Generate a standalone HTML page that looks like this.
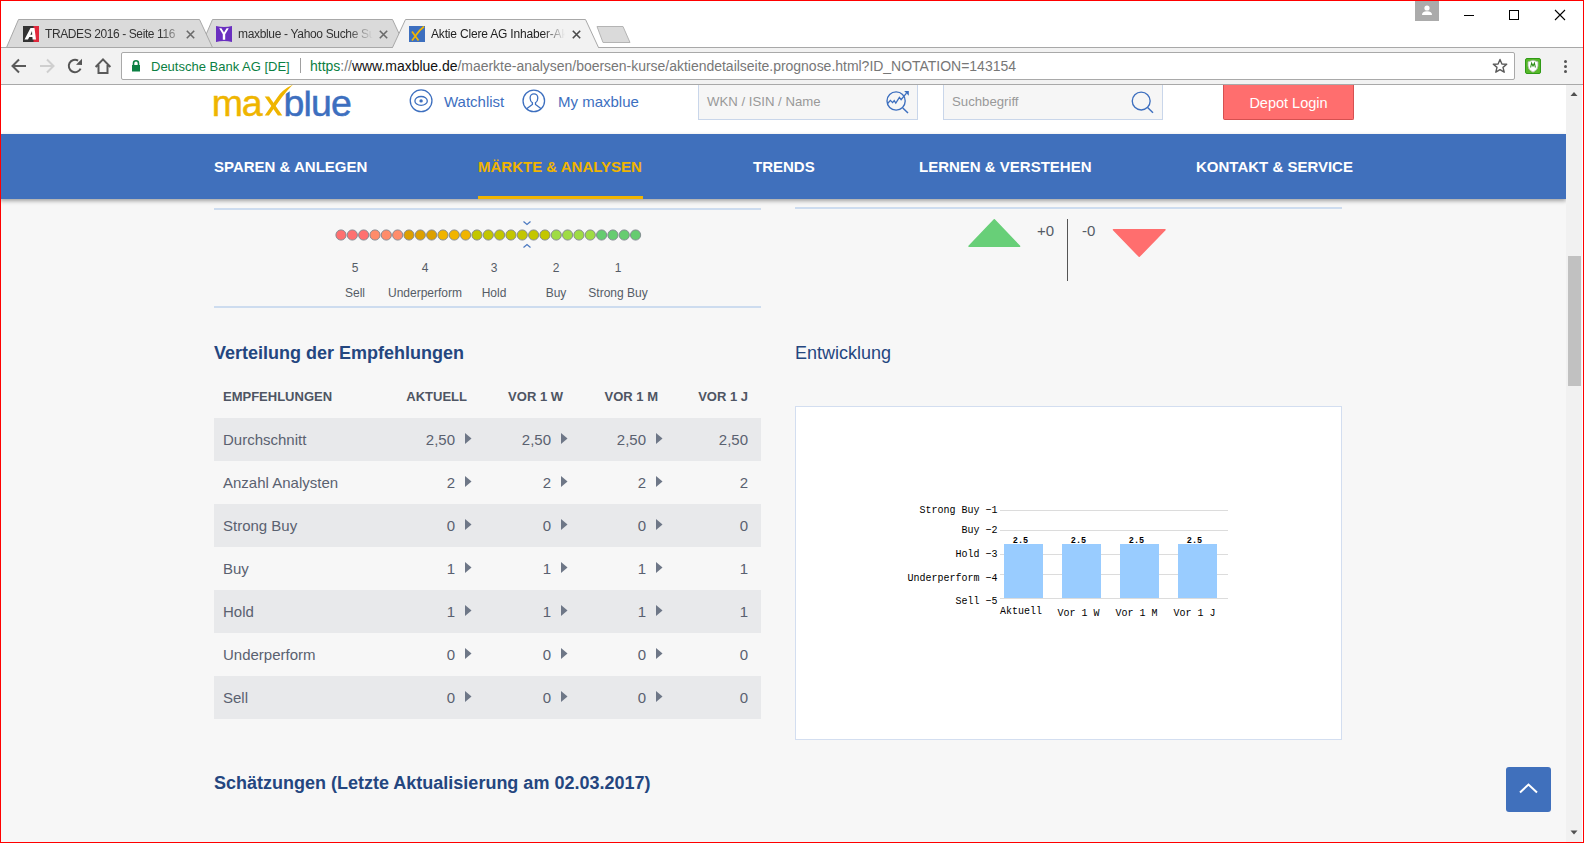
<!DOCTYPE html>
<html><head><meta charset="utf-8">
<style>
*{box-sizing:border-box;margin:0;padding:0}
html,body{width:1584px;height:843px;overflow:hidden;background:#fff;font-family:"Liberation Sans",sans-serif}
.a{position:absolute}
#win{position:absolute;left:0;top:0;width:1584px;height:843px;border:1px solid #ff0000;overflow:hidden}
/* chrome */
#tabstrip{position:absolute;left:0;top:0;width:1584px;height:47px;background:#fff}
.tab{position:absolute;top:19px;height:29px}
.tab svg{position:absolute;left:0;top:0}
.tabtxt{position:absolute;font-size:12px;letter-spacing:-0.4px;color:#333;white-space:nowrap;overflow:hidden}
.tabx{position:absolute;top:6px;width:12px;height:12px}
#toolbar{position:absolute;left:0;top:47px;width:1584px;height:38px;background:#f2f2f2;border-top:1px solid #a9a9a9;border-bottom:1px solid #a9a9a9}
#omni{position:absolute;left:121px;top:52px;width:1394px;height:28px;background:#fff;border:1px solid #a9a9a9;border-radius:2px}
/* page */
#page{position:absolute;left:0;top:85px;width:1566px;height:757px;background:#f7f7f7;overflow:hidden}
#hdr{position:absolute;left:0;top:0;width:1566px;height:49px;background:#fff}
#nav{position:absolute;left:0;top:49px;width:1566px;height:65px;background:#4070bc;box-shadow:0 2px 4px rgba(0,0,0,.35)}
.navi{position:absolute;top:24px;font-size:15px;font-weight:bold;color:#fff;white-space:nowrap}
#sb{position:absolute;left:1566px;top:85px;width:16px;height:757px;background:#f1f1f1}
.lbl{position:absolute;font-size:12px;line-height:14px;color:#555c66;white-space:nowrap;transform:translateX(-50%)}
.h2{position:absolute;font-size:18px;font-weight:bold;line-height:21px;color:#24467f;white-space:nowrap}
.th{position:absolute;top:389px;font-size:13px;font-weight:bold;line-height:15px;color:#4e5563;white-space:nowrap}
.td{position:absolute;font-size:15px;line-height:17px;color:#5a6170;white-space:nowrap}
</style></head><body>
<div id="win">
</div>
<div id="tabstrip"></div>
<div id="toolbar"></div>
<svg class="a" style="left:0;top:0" width="1584" height="48">
  <!-- tab2 (behind) -->
  <path d="M200.5,47.5 L212.5,19.5 L392.5,19.5 L405.5,47.5 Z" fill="#dadada" stroke="#a8a8a8" stroke-width="1"/>
  <!-- tab1 -->
  <path d="M6.5,47.5 L18.5,19.5 L199.5,19.5 L212.5,47.5 Z" fill="#dadada" stroke="#a8a8a8" stroke-width="1"/>
  <!-- toolbar top line -->
  <line x1="0" y1="47.5" x2="1584" y2="47.5" stroke="#a8a8a8"/>
  <!-- active tab3 -->
  <path d="M392.5,47.5 L405.5,19.5 L585.5,19.5 L598.5,47.5" fill="#f2f2f2" stroke="#a8a8a8" stroke-width="1"/>
  <rect x="393" y="47" width="205" height="2" fill="#f2f2f2"/>
  <!-- new tab btn -->
  <path d="M597,26.5 L623,26.5 L630,42.5 L603,42.5 Z" fill="#dadada" stroke="#b4b4b4" stroke-width="1" stroke-linejoin="round"/>
</svg>

<div id="omni"></div>

<!-- tab contents -->
<svg class="a" style="left:23px;top:26px" width="16" height="16"><rect width="16" height="16" fill="#333"/><rect x="10.5" width="5.5" height="16" fill="#e0283c"/><path d="M1.5,13.5 L7.5,2 L11.5,2 L13,13.5 L9.6,13.5 L9.4,11 L6.3,11 L5,13.5 Z M7.4,8.7 L9.2,8.7 L9,5 Z" fill="#fff"/></svg>
<div class="a tabtxt" style="left:45px;top:27px;width:140px;line-height:15px;color:#333;-webkit-mask-image:linear-gradient(90deg,#000 115px,transparent 140px)">TRADES 2016 - Seite 116</div>
<svg class="a" style="left:186px;top:30px" width="9" height="9"><path d="M0.8,0.8 L8.2,8.2 M8.2,0.8 L0.8,8.2" stroke="#6a6a6a" stroke-width="1.6"/></svg>
<svg class="a" style="left:216px;top:26px" width="16" height="16"><path d="M0,0 Q8,2 16,0 L16,16 Q8,14 0,16 Z" fill="#6a2fc0"/><path d="M3.2,2.3 L6.8,8.2 L6.8,13.8 L9.2,13.8 L9.2,8.2 L12.8,2.3 L10.6,2.3 L8,6.6 L5.4,2.3 Z" fill="#fff"/></svg>
<div class="a tabtxt" style="left:238px;top:27px;letter-spacing:-0.33px;width:140px;line-height:15px;color:#333;-webkit-mask-image:linear-gradient(90deg,#000 110px,transparent 135px)">maxblue - Yahoo Suche Suchergebnisse</div>
<svg class="a" style="left:379px;top:30px" width="9" height="9"><path d="M0.8,0.8 L8.2,8.2 M8.2,0.8 L0.8,8.2" stroke="#6a6a6a" stroke-width="1.6"/></svg>
<svg class="a" style="left:409px;top:26px" width="16" height="16"><rect width="16" height="16" fill="#3d6fbf"/><path d="M3,5.5 L9.5,14.5 M3,14.5 L7.5,8.5 Q10,4.5 15,0.5" stroke="#f2b600" stroke-width="1.7" fill="none"/></svg>
<div class="a tabtxt" style="left:431px;top:27px;letter-spacing:-0.18px;width:140px;line-height:15px;color:#222;-webkit-mask-image:linear-gradient(90deg,#000 112px,transparent 134px)">Aktie Clere AG Inhaber-Aktie</div>
<svg class="a" style="left:572px;top:30px" width="9" height="9"><path d="M0.8,0.8 L8.2,8.2 M8.2,0.8 L0.8,8.2" stroke="#4a4a4a" stroke-width="1.6"/></svg>
<!-- window controls -->
<div class="a" style="left:1415px;top:1px;width:24px;height:20px;background:#ababab"></div>
<svg class="a" style="left:1415px;top:1px" width="24" height="20"><circle cx="12" cy="7" r="2.6" fill="#fff"/><path d="M7,14 Q7,10.3 12,10.3 Q17,10.3 17,14 Z" fill="#fff"/></svg>
<div class="a" style="left:1464px;top:15px;width:10px;height:1px;background:#000"></div>
<div class="a" style="left:1509px;top:10px;width:10px;height:10px;border:1px solid #000"></div>
<svg class="a" style="left:1554px;top:9px" width="12" height="12"><path d="M1,1 L11,11 M11,1 L1,11" stroke="#000" stroke-width="1.1"/></svg>
<!-- toolbar icons -->
<svg class="a" style="left:10px;top:57px" width="18" height="18"><path d="M16,9 L3,9 M9,2.5 L2.5,9 L9,15.5" stroke="#5a5a5a" stroke-width="2" fill="none"/></svg>
<svg class="a" style="left:38px;top:57px" width="18" height="18"><path d="M2,9 L15,9 M9,2.5 L15.5,9 L9,15.5" stroke="#cfcfcf" stroke-width="2" fill="none"/></svg>
<svg class="a" style="left:66px;top:57px" width="18" height="18"><path d="M12.1,3.6 A6.2,6.2 0 1 0 14.6,11.6" stroke="#555" stroke-width="2" fill="none"/><path d="M16,1.8 L16,7.9 L10,7.7 Z" fill="#555"/></svg>
<svg class="a" style="left:94px;top:57px" width="18" height="18"><path d="M1.6,10 L9,2.4 L16.4,10 M4.5,8 L4.5,16 L13.5,16 L13.5,8" stroke="#5a5a5a" stroke-width="2" fill="none" stroke-linejoin="miter"/></svg>
<!-- omnibox contents -->
<svg class="a" style="left:131px;top:59px" width="10" height="13"><path d="M2.5,6 L2.5,4.3 A2.5,2.5 0 0 1 7.5,4.3 L7.5,6" stroke="#0b8043" stroke-width="1.6" fill="none"/><rect x="1" y="6" width="8" height="6.5" fill="#0b8043"/></svg>
<div class="a" style="left:151px;top:59px;font-size:13px;line-height:15px;white-space:nowrap;color:#0b8043">Deutsche Bank AG [DE]</div>
<div class="a" style="left:300px;top:58px;width:1px;height:15px;background:#a0a0a0"></div>
<div class="a" style="left:310px;top:59px;font-size:14px;letter-spacing:-0.02px;line-height:15px;white-space:nowrap;color:#777"><span style="color:#0b8043">https</span>://<span style="color:#111">www.maxblue.de</span>/maerkte-analysen/boersen-kurse/aktiendetailseite.prognose.html?ID_NOTATION=143154</div>
<svg class="a" style="left:1492px;top:58px" width="16" height="16"><path d="M8,1.5 L9.9,6 L14.7,6.3 L11,9.4 L12.2,14.2 L8,11.6 L3.8,14.2 L5,9.4 L1.3,6.3 L6.1,6 Z" stroke="#5a5a5a" stroke-width="1.4" fill="none" stroke-linejoin="round"/></svg>
<svg class="a" style="left:1525px;top:58px" width="16" height="16"><rect x="0.5" y="0.5" width="15" height="15" rx="1.5" fill="#57b82a" stroke="#2f9a16"/><path d="M8,2.2 L13,3.8 L13,8 Q13,12 8,14.2 Q3,12 3,8 L3,3.8 Z" fill="#fff" stroke="#a9b9a4" stroke-width="0.8"/><path d="M5.6,9.5 L6.6,5.2 L8,8 L9.4,5.2 L10.4,9.5" stroke="#2f8f1a" stroke-width="1.1" fill="none"/></svg>
<div class="a" style="left:1564px;top:60px;width:3.2px;height:3.2px;border-radius:2px;background:#555"></div>
<div class="a" style="left:1564px;top:65px;width:3.2px;height:3.2px;border-radius:2px;background:#555"></div>
<div class="a" style="left:1564px;top:70px;width:3.2px;height:3.2px;border-radius:2px;background:#555"></div>
<div id="page">
  <div id="hdr"></div>
  <div id="nav">
    <div class="navi" style="left:214px">SPAREN &amp; ANLEGEN</div>
    <div class="navi" style="left:478px;color:#f0b400">MÄRKTE &amp; ANALYSEN</div>
    <div class="navi" style="left:753px">TRENDS</div>
    <div class="navi" style="left:919px">LERNEN &amp; VERSTEHEN</div>
    <div class="navi" style="left:1196px">KONTAKT &amp; SERVICE</div>
    <div class="a" style="left:478px;top:62px;width:165px;height:3px;background:#f0b400"></div>
  </div>
</div>
<div id="sb"></div>

<!-- left column top -->
<div class="a" style="left:214px;top:208px;width:547px;height:2px;background:#cddcef"></div>
<svg class="a" style="left:335px;top:229px" width="320" height="12"><circle cx="6.00" cy="6" r="5.1" fill="#ff7070" stroke="#7f858d" stroke-width="0.9"/><circle cx="17.33" cy="6" r="5.1" fill="#ff7070" stroke="#7f858d" stroke-width="0.9"/><circle cx="28.66" cy="6" r="5.1" fill="#ff7070" stroke="#7f858d" stroke-width="0.9"/><circle cx="39.99" cy="6" r="5.1" fill="#ff8c6a" stroke="#7f858d" stroke-width="0.9"/><circle cx="51.32" cy="6" r="5.1" fill="#ff8c6a" stroke="#7f858d" stroke-width="0.9"/><circle cx="62.65" cy="6" r="5.1" fill="#ff8c6a" stroke="#7f858d" stroke-width="0.9"/><circle cx="73.98" cy="6" r="5.1" fill="#dda000" stroke="#7f858d" stroke-width="0.9"/><circle cx="85.31" cy="6" r="5.1" fill="#dda000" stroke="#7f858d" stroke-width="0.9"/><circle cx="96.64" cy="6" r="5.1" fill="#dda000" stroke="#7f858d" stroke-width="0.9"/><circle cx="107.97" cy="6" r="5.1" fill="#f0b400" stroke="#7f858d" stroke-width="0.9"/><circle cx="119.30" cy="6" r="5.1" fill="#f0b400" stroke="#7f858d" stroke-width="0.9"/><circle cx="130.63" cy="6" r="5.1" fill="#f0b400" stroke="#7f858d" stroke-width="0.9"/><circle cx="141.96" cy="6" r="5.1" fill="#c3c600" stroke="#7f858d" stroke-width="0.9"/><circle cx="153.29" cy="6" r="5.1" fill="#c3c600" stroke="#7f858d" stroke-width="0.9"/><circle cx="164.62" cy="6" r="5.1" fill="#c3c600" stroke="#7f858d" stroke-width="0.9"/><circle cx="175.95" cy="6" r="5.1" fill="#c3c600" stroke="#7f858d" stroke-width="0.9"/><circle cx="187.28" cy="6" r="5.1" fill="#c3c600" stroke="#7f858d" stroke-width="0.9"/><circle cx="198.61" cy="6" r="5.1" fill="#c3c600" stroke="#7f858d" stroke-width="0.9"/><circle cx="209.94" cy="6" r="5.1" fill="#c3c600" stroke="#7f858d" stroke-width="0.9"/><circle cx="221.27" cy="6" r="5.1" fill="#9fdc44" stroke="#7f858d" stroke-width="0.9"/><circle cx="232.60" cy="6" r="5.1" fill="#9fdc44" stroke="#7f858d" stroke-width="0.9"/><circle cx="243.93" cy="6" r="5.1" fill="#9fdc44" stroke="#7f858d" stroke-width="0.9"/><circle cx="255.26" cy="6" r="5.1" fill="#9fdc44" stroke="#7f858d" stroke-width="0.9"/><circle cx="266.59" cy="6" r="5.1" fill="#66cc70" stroke="#7f858d" stroke-width="0.9"/><circle cx="277.92" cy="6" r="5.1" fill="#66cc70" stroke="#7f858d" stroke-width="0.9"/><circle cx="289.25" cy="6" r="5.1" fill="#66cc70" stroke="#7f858d" stroke-width="0.9"/><circle cx="300.58" cy="6" r="5.1" fill="#66cc70" stroke="#7f858d" stroke-width="0.9"/></svg>
<svg class="a" style="left:521px;top:219px" width="12" height="30"><path d="M2.5,2.5 L6,5.5 L9.5,2.5" stroke="#4a78c0" stroke-width="1.2" fill="none"/><path d="M2.5,28.5 L6,25.5 L9.5,28.5" stroke="#4a78c0" stroke-width="1.2" fill="none"/></svg>
<div class="lbl" style="left:355px;top:261px">5</div>
<div class="lbl" style="left:425px;top:261px">4</div>
<div class="lbl" style="left:494px;top:261px">3</div>
<div class="lbl" style="left:556px;top:261px">2</div>
<div class="lbl" style="left:618px;top:261px">1</div>
<div class="lbl" style="left:355px;top:286px">Sell</div>
<div class="lbl" style="left:425px;top:286px">Underperform</div>
<div class="lbl" style="left:494px;top:286px">Hold</div>
<div class="lbl" style="left:556px;top:286px">Buy</div>
<div class="lbl" style="left:618px;top:286px">Strong Buy</div>
<div class="a" style="left:214px;top:306px;width:547px;height:2px;background:#cddcef"></div>
<!-- right column top -->
<div class="a" style="left:795px;top:207px;width:547px;height:2px;background:#cddcef"></div>
<svg class="a" style="left:966px;top:217px" width="58" height="32"><path d="M3,29.3 L28.3,2.8 L53.6,29.3 Z" fill="#68cf78" stroke="#68cf78" stroke-width="1.5" stroke-linejoin="round"/></svg>
<div class="a" style="left:1037px;top:222px;font-size:15px;line-height:17px;color:#555c66">+0</div>
<div class="a" style="left:1067px;top:219px;width:1px;height:62px;background:#555"></div>
<div class="a" style="left:1082px;top:222px;font-size:15px;line-height:17px;color:#555c66">-0</div>
<svg class="a" style="left:1111px;top:227px" width="58" height="32"><path d="M2.5,2.8 L54,2.8 L28.2,29.3 Z" fill="#ff6e6e" stroke="#ff6e6e" stroke-width="1.5" stroke-linejoin="round"/></svg>
<!-- headings -->
<div class="h2" style="left:214px;top:343px">Verteilung der Empfehlungen</div>
<div class="a" style="left:795px;top:343px;font-size:18px;line-height:21px;color:#24467f;white-space:nowrap">Entwicklung</div>
<div class="h2" style="left:214px;top:773px">Schätzungen (Letzte Aktualisierung am 02.03.2017)</div>
<!-- table -->
<div class="th" style="left:223px">EMPFEHLUNGEN</div>
<div class="th" style="right:1117px">AKTUELL</div>
<div class="th" style="right:1021px">VOR 1 W</div>
<div class="th" style="right:926px">VOR 1 M</div>
<div class="th" style="right:836px">VOR 1 J</div>
<div class="a" style="left:214px;top:418px;width:547px;height:43px;background:#e8e9eb"></div><div class="td" style="left:223px;top:431px">Durchschnitt</div><div class="td" style="right:1129px;top:431px">2,50</div><svg class="a" style="left:465px;top:433px" width="7" height="12"><path d="M0,0 L6.5,5.5 L0,11 Z" fill="#6e7787"/></svg><div class="td" style="right:1033px;top:431px">2,50</div><svg class="a" style="left:561px;top:433px" width="7" height="12"><path d="M0,0 L6.5,5.5 L0,11 Z" fill="#6e7787"/></svg><div class="td" style="right:938px;top:431px">2,50</div><svg class="a" style="left:656px;top:433px" width="7" height="12"><path d="M0,0 L6.5,5.5 L0,11 Z" fill="#6e7787"/></svg><div class="td" style="right:836px;top:431px">2,50</div><div class="a" style="left:214px;top:461px;width:547px;height:43px;background:transparent"></div><div class="td" style="left:223px;top:474px">Anzahl Analysten</div><div class="td" style="right:1129px;top:474px">2</div><svg class="a" style="left:465px;top:476px" width="7" height="12"><path d="M0,0 L6.5,5.5 L0,11 Z" fill="#6e7787"/></svg><div class="td" style="right:1033px;top:474px">2</div><svg class="a" style="left:561px;top:476px" width="7" height="12"><path d="M0,0 L6.5,5.5 L0,11 Z" fill="#6e7787"/></svg><div class="td" style="right:938px;top:474px">2</div><svg class="a" style="left:656px;top:476px" width="7" height="12"><path d="M0,0 L6.5,5.5 L0,11 Z" fill="#6e7787"/></svg><div class="td" style="right:836px;top:474px">2</div><div class="a" style="left:214px;top:504px;width:547px;height:43px;background:#e8e9eb"></div><div class="td" style="left:223px;top:517px">Strong Buy</div><div class="td" style="right:1129px;top:517px">0</div><svg class="a" style="left:465px;top:519px" width="7" height="12"><path d="M0,0 L6.5,5.5 L0,11 Z" fill="#6e7787"/></svg><div class="td" style="right:1033px;top:517px">0</div><svg class="a" style="left:561px;top:519px" width="7" height="12"><path d="M0,0 L6.5,5.5 L0,11 Z" fill="#6e7787"/></svg><div class="td" style="right:938px;top:517px">0</div><svg class="a" style="left:656px;top:519px" width="7" height="12"><path d="M0,0 L6.5,5.5 L0,11 Z" fill="#6e7787"/></svg><div class="td" style="right:836px;top:517px">0</div><div class="a" style="left:214px;top:547px;width:547px;height:43px;background:transparent"></div><div class="td" style="left:223px;top:560px">Buy</div><div class="td" style="right:1129px;top:560px">1</div><svg class="a" style="left:465px;top:562px" width="7" height="12"><path d="M0,0 L6.5,5.5 L0,11 Z" fill="#6e7787"/></svg><div class="td" style="right:1033px;top:560px">1</div><svg class="a" style="left:561px;top:562px" width="7" height="12"><path d="M0,0 L6.5,5.5 L0,11 Z" fill="#6e7787"/></svg><div class="td" style="right:938px;top:560px">1</div><svg class="a" style="left:656px;top:562px" width="7" height="12"><path d="M0,0 L6.5,5.5 L0,11 Z" fill="#6e7787"/></svg><div class="td" style="right:836px;top:560px">1</div><div class="a" style="left:214px;top:590px;width:547px;height:43px;background:#e8e9eb"></div><div class="td" style="left:223px;top:603px">Hold</div><div class="td" style="right:1129px;top:603px">1</div><svg class="a" style="left:465px;top:605px" width="7" height="12"><path d="M0,0 L6.5,5.5 L0,11 Z" fill="#6e7787"/></svg><div class="td" style="right:1033px;top:603px">1</div><svg class="a" style="left:561px;top:605px" width="7" height="12"><path d="M0,0 L6.5,5.5 L0,11 Z" fill="#6e7787"/></svg><div class="td" style="right:938px;top:603px">1</div><svg class="a" style="left:656px;top:605px" width="7" height="12"><path d="M0,0 L6.5,5.5 L0,11 Z" fill="#6e7787"/></svg><div class="td" style="right:836px;top:603px">1</div><div class="a" style="left:214px;top:633px;width:547px;height:43px;background:transparent"></div><div class="td" style="left:223px;top:646px">Underperform</div><div class="td" style="right:1129px;top:646px">0</div><svg class="a" style="left:465px;top:648px" width="7" height="12"><path d="M0,0 L6.5,5.5 L0,11 Z" fill="#6e7787"/></svg><div class="td" style="right:1033px;top:646px">0</div><svg class="a" style="left:561px;top:648px" width="7" height="12"><path d="M0,0 L6.5,5.5 L0,11 Z" fill="#6e7787"/></svg><div class="td" style="right:938px;top:646px">0</div><svg class="a" style="left:656px;top:648px" width="7" height="12"><path d="M0,0 L6.5,5.5 L0,11 Z" fill="#6e7787"/></svg><div class="td" style="right:836px;top:646px">0</div><div class="a" style="left:214px;top:676px;width:547px;height:43px;background:#e8e9eb"></div><div class="td" style="left:223px;top:689px">Sell</div><div class="td" style="right:1129px;top:689px">0</div><svg class="a" style="left:465px;top:691px" width="7" height="12"><path d="M0,0 L6.5,5.5 L0,11 Z" fill="#6e7787"/></svg><div class="td" style="right:1033px;top:689px">0</div><svg class="a" style="left:561px;top:691px" width="7" height="12"><path d="M0,0 L6.5,5.5 L0,11 Z" fill="#6e7787"/></svg><div class="td" style="right:938px;top:689px">0</div><svg class="a" style="left:656px;top:691px" width="7" height="12"><path d="M0,0 L6.5,5.5 L0,11 Z" fill="#6e7787"/></svg><div class="td" style="right:836px;top:689px">0</div>
<!-- chart box -->
<div class="a" style="left:795px;top:406px;width:547px;height:334px;background:#fff;border:1px solid #d3def0"></div>

<svg class="a" style="left:880px;top:495px" width="360" height="130"><line x1="120" y1="15.5" x2="348" y2="15.5" stroke="#dcdcdc" stroke-width="1"/><line x1="120" y1="35.5" x2="348" y2="35.5" stroke="#dcdcdc" stroke-width="1"/><line x1="120" y1="59.5" x2="348" y2="59.5" stroke="#dcdcdc" stroke-width="1"/><line x1="120" y1="79.5" x2="348" y2="79.5" stroke="#dcdcdc" stroke-width="1"/><line x1="120" y1="103.5" x2="348" y2="103.5" stroke="#dcdcdc" stroke-width="1"/><rect x="124" y="49" width="39" height="54" fill="#99ccff"/><text x="140.5" y="0" transform="translate(0,48) scale(1,1.1)" text-anchor="middle" font-family="Liberation Mono" font-size="8.5" font-weight="bold" fill="#000">2.5</text><rect x="182" y="49" width="39" height="54" fill="#99ccff"/><text x="198.5" y="0" transform="translate(0,48) scale(1,1.1)" text-anchor="middle" font-family="Liberation Mono" font-size="8.5" font-weight="bold" fill="#000">2.5</text><rect x="240" y="49" width="39" height="54" fill="#99ccff"/><text x="256.5" y="0" transform="translate(0,48) scale(1,1.1)" text-anchor="middle" font-family="Liberation Mono" font-size="8.5" font-weight="bold" fill="#000">2.5</text><rect x="298" y="49" width="39" height="54" fill="#99ccff"/><text x="314.5" y="0" transform="translate(0,48) scale(1,1.1)" text-anchor="middle" font-family="Liberation Mono" font-size="8.5" font-weight="bold" fill="#000">2.5</text><text x="117.5" y="0" transform="translate(0,18.299999999999955) scale(1,1.08)" text-anchor="end" font-family="Liberation Mono" font-size="10" font-weight="normal" fill="#000">Strong Buy −1</text><text x="117.5" y="0" transform="translate(0,38.299999999999955) scale(1,1.08)" text-anchor="end" font-family="Liberation Mono" font-size="10" font-weight="normal" fill="#000">Buy −2</text><text x="117.5" y="0" transform="translate(0,62.299999999999955) scale(1,1.08)" text-anchor="end" font-family="Liberation Mono" font-size="10" font-weight="normal" fill="#000">Hold −3</text><text x="117.5" y="0" transform="translate(0,86.29999999999995) scale(1,1.08)" text-anchor="end" font-family="Liberation Mono" font-size="10" font-weight="normal" fill="#000">Underperform −4</text><text x="117.5" y="0" transform="translate(0,109.29999999999995) scale(1,1.08)" text-anchor="end" font-family="Liberation Mono" font-size="10" font-weight="normal" fill="#000">Sell −5</text><text x="141" y="0" transform="translate(0,118.7) scale(1,1.08)" text-anchor="middle" font-family="Liberation Mono" font-size="10" font-weight="normal" fill="#000">Aktuell</text><text x="198.5" y="0" transform="translate(0,120.5) scale(1,1.08)" text-anchor="middle" font-family="Liberation Mono" font-size="10" font-weight="normal" fill="#000">Vor 1 W</text><text x="256.5" y="0" transform="translate(0,120.5) scale(1,1.08)" text-anchor="middle" font-family="Liberation Mono" font-size="10" font-weight="normal" fill="#000">Vor 1 M</text><text x="314.5" y="0" transform="translate(0,120.5) scale(1,1.08)" text-anchor="middle" font-family="Liberation Mono" font-size="10" font-weight="normal" fill="#000">Vor 1 J</text></svg>
<!-- back to top -->
<div class="a" style="left:1506px;top:767px;width:45px;height:45px;background:#4070bc;border-radius:3px"></div>
<svg class="a" style="left:1506px;top:767px" width="45" height="45"><path d="M14,25.5 L22.5,17.5 L31,25.5" stroke="#fff" stroke-width="2" fill="none"/></svg>
<!-- scrollbar bits -->
<div class="a" style="left:1568px;top:256px;width:13px;height:130px;background:#c1c1c1"></div>
<svg class="a" style="left:1566px;top:85px" width="16" height="16"><path d="M4.5,11 L8,7 L11.5,11 Z" fill="#505050"/></svg>
<svg class="a" style="left:1566px;top:826px" width="16" height="16"><path d="M4.5,4.5 L11.5,4.5 L8,8.5 Z" fill="#505050"/></svg>

<!-- header -->
<svg class="a" style="left:205px;top:80px" width="160" height="45">
  <text x="6.8" y="35.8" font-family="Liberation Sans" font-size="37.5" fill="#efb500" stroke="#efb500" stroke-width="0.5" letter-spacing="-1.3">ma</text>
  <path d="M59.7,16.4 L64.1,16.4 L77.3,35.6 L72.9,35.6 Z" fill="#efb500"/>
  <text x="78.6" y="35.8" font-family="Liberation Sans" font-size="37.5" fill="#3d6fbf" stroke="#3d6fbf" stroke-width="0.5" letter-spacing="-0.9">blue</text>
  <path d="M79,5.5 L112,5.5 L112,10.6 L86,10.6 L79,15 Z" fill="#fff"/>
  <path d="M59.7,35.6 L72.6,16.9 Q75,13.5 77.8,11 Q80,9 82.5,7.4 L88,4.4 L86,6.4 Q84,8.5 82,11 L77.1,16.9 L63.9,35.6 Z" fill="#efb500"/>
</svg>
<svg class="a" style="left:408px;top:88px" width="26" height="26"><circle cx="13.1" cy="12.8" r="10.85" stroke="#3d6fbf" stroke-width="1.3" fill="none"/><ellipse cx="13.1" cy="12.9" rx="6.2" ry="4.4" stroke="#3d6fbf" stroke-width="1.3" fill="none"/><circle cx="13.1" cy="12.9" r="1.7" fill="#3d6fbf"/></svg>
<div class="a" style="left:444px;top:93px;font-size:15px;line-height:17px;color:#3d6fbf;white-space:nowrap">Watchlist</div>
<svg class="a" style="left:521px;top:88px" width="26" height="26"><circle cx="12.8" cy="12.9" r="10.75" stroke="#3d6fbf" stroke-width="1.3" fill="none"/><path d="M5.6,20.8 L11.4,16.4 L11.4,14.7 Q9.1,13.2 9.1,9.9 A3.85,4.1 0 0 1 16.8,9.9 Q16.8,13.2 14.5,14.7 L14.5,16.4 L20.2,20.8" stroke="#3d6fbf" stroke-width="1.3" fill="none"/></svg>
<div class="a" style="left:558px;top:93px;font-size:15px;line-height:17px;color:#3d6fbf;white-space:nowrap">My maxblue</div>
<div class="a" style="left:698px;top:85px;width:220px;height:35px;background:#f6f6f6;border:1px solid #c9d6ea;border-top:none"></div>
<div class="a" style="left:707px;top:94px;font-size:13.2px;line-height:16px;color:#999;white-space:nowrap">WKN / ISIN / Name</div>
<svg class="a" style="left:885px;top:88px" width="26" height="26"><circle cx="11.1" cy="13" r="9.1" stroke="#3d6fbf" stroke-width="1.35" fill="none"/><path d="M17.8,20 L23,25" stroke="#3d6fbf" stroke-width="1.5"/><path d="M2.6,15.5 L5.4,12.4 L7.6,14.6 L9.2,12.6 L10.8,15 L14.4,9.4 L16.1,11.6 L21.5,5.2" stroke="#3d6fbf" stroke-width="1.3" fill="none" stroke-linejoin="miter"/><path d="M19.2,3.1 L23.8,3.1 L23.8,7.7 Z" fill="#3d6fbf"/></svg>
<div class="a" style="left:943px;top:85px;width:220px;height:35px;background:#f6f6f6;border:1px solid #c9d6ea;border-top:none"></div>
<div class="a" style="left:952px;top:94px;font-size:13.2px;line-height:16px;color:#999;white-space:nowrap">Suchbegriff</div>
<svg class="a" style="left:1129px;top:89px" width="26" height="26"><circle cx="12.2" cy="12" r="8.95" stroke="#3d6fbf" stroke-width="1.35" fill="none"/><path d="M18.6,18.4 L24,23.8" stroke="#3d6fbf" stroke-width="1.4"/></svg>
<div class="a" style="left:1223px;top:85px;width:131px;height:35px;background:#ff6e6e;border:1px solid #d65050;border-top:none;border-radius:0 0 2px 2px;color:#fff;font-size:14.5px;line-height:36px;text-align:center">Depot Login</div>

<div class="a" style="left:0;top:0;width:1584px;height:1px;background:#f00"></div>
<div class="a" style="left:0;top:842px;width:1584px;height:1px;background:#f00"></div>
<div class="a" style="left:0;top:0;width:1px;height:843px;background:#f00"></div>
<div class="a" style="left:1583px;top:0;width:1px;height:843px;background:#f00"></div>
</body></html>
